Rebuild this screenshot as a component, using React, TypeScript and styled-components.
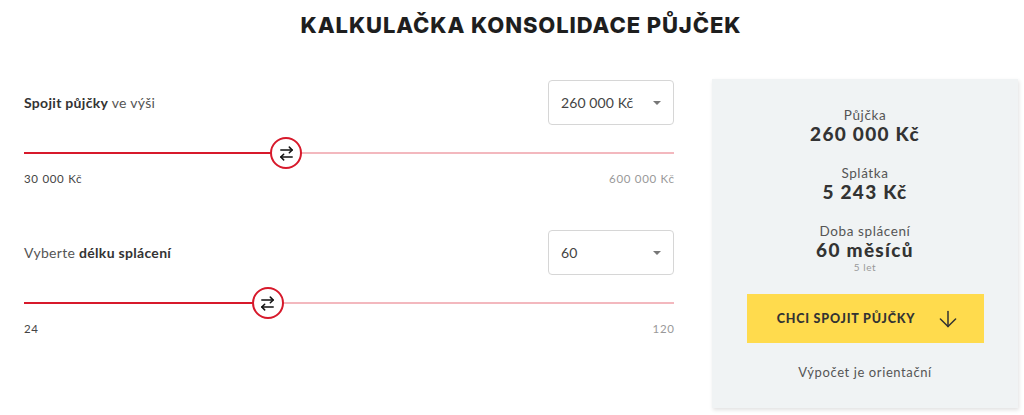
import React from 'react';
import styled, { createGlobalStyle } from 'styled-components';
import { ArrowRightLeft, ArrowDown } from 'lucide-react';

const GlobalStyle = createGlobalStyle`
  * { box-sizing: border-box; }
  body {
    margin: 0;
    background: #fff;
    font-family: Lato, "Open Sans", sans-serif;
    color: #333;
  }
`;

const Page = styled.div`
  width: 1024px;
  height: 415px;
  overflow: hidden;
  padding: 0 6px 0 24px;
`;

const Title = styled.h1`
  margin: 12px 0 0;
  text-align: center;
  font-family: Inter, "Liberation Sans", sans-serif;
  font-weight: 800;
  font-size: 22px;
  line-height: 26px;
  letter-spacing: 0.9px;
  color: #1e1e1e;
`;

const Main = styled.div`
  display: grid;
  grid-template-columns: 650px 306px;
  gap: 38px;
  margin-top: 41px;
`;

const Controls = styled.div`
  display: flex;
  flex-direction: column;
  gap: 44px;
  padding-top: 1px;
`;

const Field = styled.div`
  display: flex;
  flex-direction: column;
`;

const FieldHead = styled.div`
  display: flex;
  justify-content: space-between;
  align-items: center;
  height: 45px;
`;

const Label = styled.div`
  font-size: 14px;
  letter-spacing: 0.3px;
  color: #555;
  b {
    font-weight: 700;
    color: #333;
  }
`;

const Select = styled.div`
  width: 126px;
  height: 45px;
  border: 1px solid #d6d6d6;
  border-radius: 4px;
  display: flex;
  align-items: center;
  justify-content: space-between;
  padding: 0 12px 0 12px;
  font-size: 14px;
  letter-spacing: 0.1px;
  color: #444;
  background: #fff;
`;

const Caret = styled.span`
  width: 0;
  height: 0;
  border-left: 4.5px solid transparent;
  border-right: 4.5px solid transparent;
  border-top: 4.5px solid #777;
`;

const SliderBox = styled.div`
  position: relative;
  height: 32px;
  margin-top: 12px;
  display: flex;
  align-items: center;
`;

const Track = styled.div`
  width: 100%;
  height: 2px;
  background: #f3b8be;
  display: flex;
`;

const Fill = styled.div`
  height: 100%;
  background: #d7192b;
`;

const Thumb = styled.div`
  position: absolute;
  top: 0;
  width: 32px;
  height: 32px;
  margin-left: -16px;
  border-radius: 50%;
  border: 2px solid #d7192b;
  background: #fff;
  display: flex;
  align-items: center;
  justify-content: center;
  color: #111;
`;

const Range = styled.div`
  display: flex;
  justify-content: space-between;
  margin-top: 3px;
  font-size: 11.5px;
  letter-spacing: 0.7px;
  line-height: 14px;
`;

const RangeMin = styled.span`
  color: #444;
`;

const RangeMax = styled.span`
  color: #999;
  margin-right: -0.7px;
`;

const Panel = styled.aside`
  background: #f0f3f4;
  height: 329px;
  padding: 28px 30px 27px;
  display: flex;
  flex-direction: column;
  align-items: center;
  box-shadow: 1px 2px 4px rgba(0, 0, 0, 0.12);
`;

const Item = styled.div<{ $gap?: number }>`
  display: flex;
  flex-direction: column;
  align-items: center;
  margin-top: ${p => p.$gap ?? 0}px;
`;

const ItemLabel = styled.div`
  font-size: 13.5px;
  line-height: 16px;
  letter-spacing: 0.6px;
  color: #555;
`;

const ItemValue = styled.div`
  font-size: 19px;
  line-height: 22px;
  font-weight: 900;
  letter-spacing: 1.3px;
  color: #333;
`;

const ItemNote = styled.div`
  font-size: 10px;
  line-height: 12px;
  letter-spacing: 0.6px;
  color: #999;
`;

const Button = styled.button`
  margin-top: 21px;
  width: 237px;
  height: 49px;
  border: none;
  background: #ffdb4d;
  display: flex;
  align-items: center;
  justify-content: center;
  gap: 20px;
  font-family: Lato, "Open Sans", sans-serif;
  font-weight: 900;
  font-size: 12.5px;
  letter-spacing: 0.8px;
  color: #333;
  padding: 0 0 0 8px;
`;

const Footnote = styled.div`
  margin-top: 21px;
  font-size: 13px;
  line-height: 16px;
  letter-spacing: 0.6px;
  color: #555;
`;

interface SliderProps {
  min: number;
  max: number;
  value: number;
  minLabel: string;
  maxLabel: string;
}

const Slider = ({ min, max, value, minLabel, maxLabel }: SliderProps) => {
  const pct = ((value - min) / (max - min)) * 100;
  return (
    <>
      <SliderBox>
        <Track>
          <Fill style={{ width: `${pct}%` }} />
        </Track>
        <Thumb style={{ left: `${pct}%` }}>
          <ArrowRightLeft size={17} strokeWidth={2.2} />
        </Thumb>
      </SliderBox>
      <Range>
        <RangeMin>{minLabel}</RangeMin>
        <RangeMax>{maxLabel}</RangeMax>
      </Range>
    </>
  );
};

const App = () => (
  <Page>
    <GlobalStyle />
    <Title>KALKULAČKA KONSOLIDACE PŮJČEK</Title>
    <Main>
      <Controls>
        <Field>
          <FieldHead>
            <Label>
              <b>Spojit půjčky</b> ve výši
            </Label>
            <Select>
              260 000 Kč
              <Caret />
            </Select>
          </FieldHead>
          <Slider min={30000} max={600000} value={260000} minLabel="30 000 Kč" maxLabel="600 000 Kč" />
        </Field>
        <Field>
          <FieldHead>
            <Label>
              Vyberte <b>délku splácení</b>
            </Label>
            <Select>
              60
              <Caret />
            </Select>
          </FieldHead>
          <Slider min={24} max={120} value={60} minLabel="24" maxLabel="120" />
        </Field>
      </Controls>
      <Panel>
        <Item>
          <ItemLabel>Půjčka</ItemLabel>
          <ItemValue>260 000 Kč</ItemValue>
        </Item>
        <Item $gap={20}>
          <ItemLabel>Splátka</ItemLabel>
          <ItemValue>5 243 Kč</ItemValue>
        </Item>
        <Item $gap={20}>
          <ItemLabel>Doba splácení</ItemLabel>
          <ItemValue>60 měsíců</ItemValue>
          <ItemNote>5 let</ItemNote>
        </Item>
        <Button>
          CHCI SPOJIT PŮJČKY
          <ArrowDown size={26} strokeWidth={1.4} />
        </Button>
        <Footnote>Výpočet je orientační</Footnote>
      </Panel>
    </Main>
  </Page>
);

export default App;
